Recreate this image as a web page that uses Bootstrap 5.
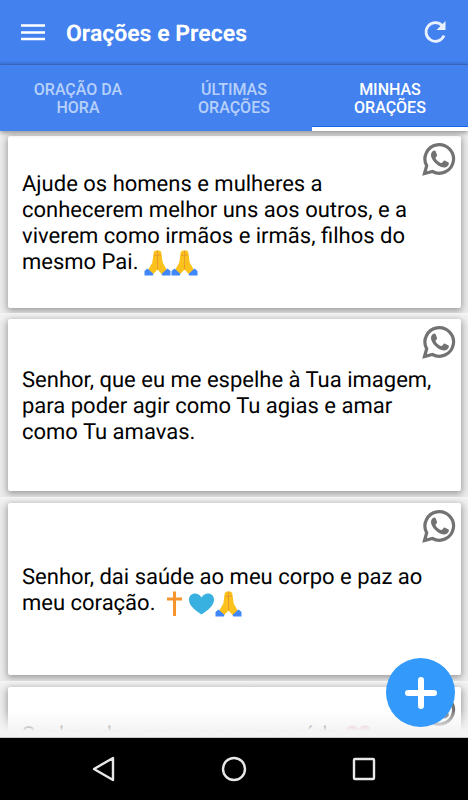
<!DOCTYPE html>
<html lang="pt-BR">
<head>
<meta charset="utf-8">
<meta name="viewport" content="width=device-width, initial-scale=1">
<title>Orações e Preces</title>
<link href="https://cdn.jsdelivr.net/npm/bootstrap@5.3.0/dist/css/bootstrap.min.css" rel="stylesheet">
<style>
body { font-family: Roboto, "Liberation Sans", sans-serif; color: #000; background: #f4f4f4; text-rendering: geometricPrecision; }
.app-blue { background: #4381ef; }
.topbar { height: 65px; border-bottom: 1px solid #3a6cc5; box-shadow: inset 0 -2px 1px #3f79df; }
.topbar h1 { font-size: 23px; line-height: 28px; padding-top: 3px; }
.tabs { box-shadow: 0 2px 5px rgba(0,0,0,.4); z-index: 2; }
.tab-btn { height: 66px; font-size: 16px; line-height: 18px; font-weight: 500; color: #b7d0fa; border: 0; border-bottom: 4px solid transparent; background: none; padding: 6px 24px 0; }
.tab-btn.active { color: #fff; border-bottom-color: #fff; box-shadow: inset 0 -1px 0 #1467e8; }
.prayer { flex: none; overflow: hidden; padding: 6px 7px 6px 8px; background: linear-gradient(#f4f4f4, #ececec 12px); }
.prayer:first-child { padding-top: 5px; padding-bottom: 5px; }
.prayer-card { min-height: 172px; border: 0; border-radius: 2px; padding: 3px 14px 0; box-shadow: 0 2px 7px 1px rgba(0,0,0,.34); }
.prayer-card.partly { padding-top: 36px; }
.prayer-card p { font-size: 22px; line-height: 26px; padding-right: 14px; }
.share { top: 6px; right: 5px; line-height: 0; }
.emoji { width: 27px; height: 27px; margin: -2px 0; vertical-align: -5px; }
.fade-out { height: 28px; background: linear-gradient(rgba(244,244,244,0), #f4f4f4 21px); border-bottom: 1px solid #c8c8c8; }
.fab { width: 69px; height: 69px; right: 13px; bottom: 11px; background: #3399fb; border: 0; z-index: 3; }
.sysbar { height: 62px; background: #000; }
.sys-keys { gap: 104px; }
</style>
<script src="https://cdn.jsdelivr.net/npm/bootstrap@5.3.0/dist/js/bootstrap.bundle.min.js"></script>
</head>
<body>
<svg class="d-none" aria-hidden="true">
  <symbol id="whatsapp" viewBox="0 0 34 34">
    <path d="M2.500 31.500 4.700 23.800A14.300 14.300 0 1 1 10.400 29.500Z" fill="none" stroke="#727272" stroke-width="3.200"/>
    <path d="M11 9c1-.8 2.200-.7 2.600.3l1.400 3.400c.3.8-.1 1.400-1.300 2.700-.3.400-.2.800.1 1.300 1.300 2.200 2.800 3.300 5 4.300.6.200.9.100 1.300-.3l1.500-1.800c.4-.5.8-.5 1.400-.2l3.200 1.600c.7.3.8.8.6 1.800-.4 2.200-2.700 3.500-4.700 3.400-3.700-.3-7.600-2.600-10.300-6C10.300 17.500 9 15.300 9 13c0-1.700.8-3.100 2-4Z" fill="#727272"/>
  </symbol>
  <symbol id="pray" viewBox="0 0 27 27">
    <path d="M12.700 1.500c-1.800-.3-2.900.8-3.100 2.500L8.300 13.500 3.800 21.500 8.800 25.500 13.500 20.500 18.200 25.500 23.200 21.500 18.700 13.500 17.400 4c-.2-1.700-1.300-2.800-3.100-2.500Z" fill="#fbc11c"/>
    <path d="M13.500 1.500V20.500M10 6.200h7" stroke="#e89a2c" stroke-width="1"/>
    <path d="m3.500 19.500 6 5.500-.8 1.500H.5v-4.500Zm20 0-6 5.500.8 1.500h8.200v-4.500Z" fill="#3f87fa"/>
  </symbol>
  <symbol id="cross" viewBox="0 0 27 27">
    <path d="M13.500 1.500v24.500M6 9h15" stroke="#f7942b" stroke-width="3"/>
  </symbol>
  <symbol id="heart" viewBox="0 0 27 27">
    <path d="M13.500 24.500C9 21.500 1 16.500 1 9.800 1 2.500 10 1.500 13.500 7.500 17 1.500 26 2.500 26 9.800c0 6.700-8 11.700-12.500 14.700Z" fill="currentColor"/>
  </symbol>
</svg>
<div class="vh-100 d-flex flex-column overflow-hidden">
  <header class="topbar app-blue d-flex align-items-center flex-shrink-0 ps-3 pe-3">
    <button class="btn p-0 border-0 ms-1 d-flex" aria-label="Menu">
      <svg width="26" height="18" viewBox="0 0 26 18"><path d="M1 2.500h24M1 9.500h24M1 16h24" stroke="#fff" stroke-width="2.400"/></svg>
    </button>
    <h1 class="text-white fw-bold m-0 ms-3 ps-1 flex-grow-1">Orações e Preces</h1>
    <button class="btn p-0 border-0 me-1 d-flex" aria-label="Atualizar">
      <svg width="26" height="26" viewBox="0 0 26 26"><path d="M20.500 7A9.300 9.300 0 1 0 22 16.500" fill="none" stroke="#e9f1ff" stroke-width="2.800"/><path d="M23.500 2v9h-9Z" fill="#e9f1ff"/></svg>
    </button>
  </header>
  <nav class="tabs app-blue d-flex flex-shrink-0 position-relative" role="tablist" aria-label="Seções">
    <button class="tab-btn col-4" role="tab" aria-selected="false">ORAÇÃO DA HORA</button>
    <button class="tab-btn col-4" role="tab" aria-selected="false">ÚLTIMAS ORAÇÕES</button>
    <button class="tab-btn active col-4" role="tab" aria-selected="true">MINHAS ORAÇÕES</button>
  </nav>
  <main class="flex-grow-1 position-relative overflow-hidden d-flex flex-column">
    <section class="prayer"><article class="prayer-card card justify-content-center">
      <button class="share btn p-0 border-0 position-absolute" aria-label="Compartilhar no WhatsApp"><svg width="34" height="34"><use href="#whatsapp"/></svg></button>
      <p class="m-0">Ajude os homens e mulheres a conhecerem melhor uns aos outros, e a viverem como irmãos e irmãs, filhos do mesmo Pai. <svg class="emoji"><use href="#pray"/></svg><svg class="emoji"><use href="#pray"/></svg></p>
    </article></section>
    <section class="prayer"><article class="prayer-card card justify-content-center">
      <button class="share btn p-0 border-0 position-absolute" aria-label="Compartilhar no WhatsApp"><svg width="34" height="34"><use href="#whatsapp"/></svg></button>
      <p class="m-0">Senhor, que eu me espelhe à Tua imagem, para poder agir como Tu agias e amar como Tu amavas.</p>
    </article></section>
    <section class="prayer"><article class="prayer-card card justify-content-center">
      <button class="share btn p-0 border-0 position-absolute" aria-label="Compartilhar no WhatsApp"><svg width="34" height="34"><use href="#whatsapp"/></svg></button>
      <p class="m-0">Senhor, dai saúde ao meu corpo e paz ao meu coração. <svg class="emoji"><use href="#cross"/></svg><svg class="emoji" color="#38b1e0"><use href="#heart"/></svg><svg class="emoji"><use href="#pray"/></svg></p>
    </article></section>
    <section class="prayer"><article class="prayer-card partly card">
      <button class="share btn p-0 border-0 position-absolute" aria-label="Compartilhar no WhatsApp"><svg width="34" height="34"><use href="#whatsapp"/></svg></button>
      <p class="m-0">Senhor, dou graças e com saúde <svg class="emoji" color="#e58fb0"><use href="#heart"/></svg></p>
    </article></section>
    <div class="fade-out position-absolute bottom-0 start-0 end-0"></div>
    <button class="fab btn rounded-circle position-absolute p-0 d-flex align-items-center justify-content-center" aria-label="Nova oração">
      <svg width="32" height="32" viewBox="0 0 32 32"><path d="M16 3v26M3 16h26" stroke="#fff" stroke-width="6" stroke-linecap="round"/></svg>
    </button>
  </main>
  <footer class="sysbar d-flex flex-shrink-0 justify-content-center align-items-center">
    <div class="sys-keys d-flex">
      <button class="btn p-0 border-0 d-flex" aria-label="Voltar"><svg width="26" height="26" viewBox="0 0 26 26"><path d="M22 2v22L3 13Z" fill="none" stroke="#e8e8e8" stroke-width="2.400" stroke-linejoin="round"/></svg></button>
      <button class="btn p-0 border-0 d-flex" aria-label="Início"><svg width="26" height="26" viewBox="0 0 26 26"><circle cx="13" cy="13" r="11" fill="none" stroke="#e8e8e8" stroke-width="2.400"/></svg></button>
      <button class="btn p-0 border-0 d-flex" aria-label="Recentes"><svg width="26" height="26" viewBox="0 0 26 26"><rect x="3" y="3" width="20" height="20" rx="1" fill="none" stroke="#e8e8e8" stroke-width="2.400"/></svg></button>
    </div>
  </footer>
</div>
</body>
</html>
